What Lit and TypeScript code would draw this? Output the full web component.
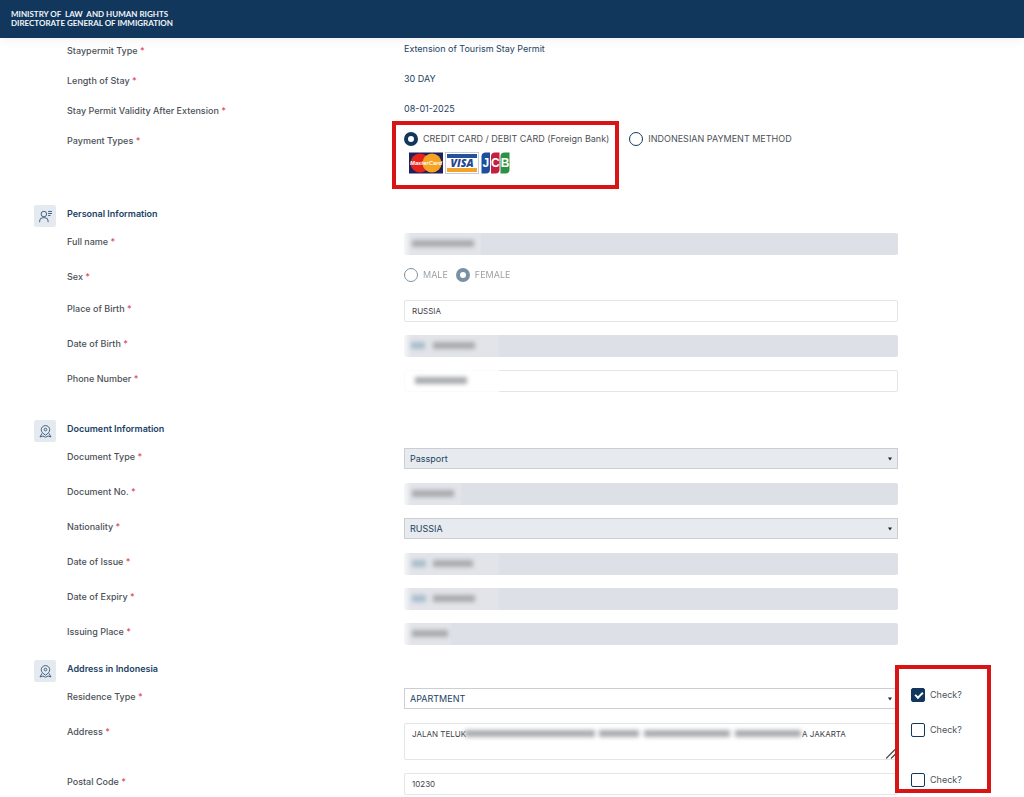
import { LitElement, html, css, svg, nothing, TemplateResult } from "lit";
import { customElement } from "lit/decorators.js";
import { classMap } from "lit/directives/class-map.js";
import { styleMap } from "lit/directives/style-map.js";

type Bar = { left: number; width: number; blue?: boolean };

const personIcon = svg`
  <circle cx="6" cy="5" r="3.400"></circle>
  <path d="M.8 15v-1.500a4 4 0 0 1 4-4h2.400a4 4 0 0 1 4 4V15"></path>
  <path d="M11.200 1.800H16M11.200 4.300H16M11.200 6.800h3"></path>`;

const pinIcon = svg`
  <path d="M8 12.500C5.200 10.600 2.800 8.700 2.800 5.900a5.200 5.200 0 0 1 10.400 0c0 2.800-2.400 4.700-5.200 6.600z"></path>
  <circle cx="8" cy="5.600" r="1.600"></circle>
  <path d="M3.800 10.200 1.200 14.800 4.800 13.600 8 15 11.200 13.600 14.800 14.800 12.200 10.200"></path>`;

@customElement("app-root")
export class AppRoot extends LitElement {
  static styles = css`
    :host {
      display: block;
      background: #fff;
      color: #4c5157;
      font: 400 9px/12px Inter, "Liberation Sans", sans-serif;
    }
    * {
      box-sizing: border-box;
    }
    .header {
      position: relative;
      display: flex;
      align-items: center;
      height: 38px;
      padding: 0 11px 1px;
      background: #12375c;
      color: #f1f5f9;
      font: 700 8px/9px Lato, "Liberation Sans", sans-serif;
      box-shadow: 0 2px 10px rgba(0, 0, 0, 0.06);
    }
    .brand {
      margin: 0;
      white-space: pre;
    }
    .main {
      padding: 4px 0 2px 67px;
    }
    .rows {
      display: flex;
      flex-direction: column;
      gap: 13px;
      position: relative;
    }
    .rows.info {
      gap: 15px;
      margin-bottom: 31px;
    }
    .row {
      display: grid;
      grid-template-columns: 337fr 494fr 126fr;
      align-items: start;
      min-height: 22px;
    }
    .info .row {
      min-height: 15px;
    }
    .row.short {
      min-height: 19px;
    }
    .label {
      padding-top: 3px;
      font-weight: 500;
    }
    .star {
      color: #e04a5c;
    }
    .value {
      line-height: 14px;
      color: #23425f;
    }
    .section {
      margin-bottom: 28px;
    }
    .section.tight {
      margin-bottom: 15px;
    }
    .section.last {
      margin-bottom: 0;
    }
    .head {
      display: flex;
      align-items: flex-start;
      gap: 11px;
      margin-left: -33px;
      height: 28px;
    }
    .badge {
      display: grid;
      place-items: center;
      width: 22px;
      height: 22px;
      border-radius: 2px;
      background: #e5eaf0;
    }
    .badge svg {
      width: 13px;
      height: 13px;
      fill: none;
      stroke: #3f5f80;
      stroke-width: 1.2;
    }
    .title {
      margin: 3px 0 0;
      font: 600 9px/12px Inter, "Liberation Sans", sans-serif;
      color: #1b4265;
    }
    .field {
      position: relative;
      display: block;
    }
    .text,
    .select,
    .area {
      display: block;
      width: 100%;
      margin: 0;
      border: 1px solid #e3e5e7;
      border-radius: 2px;
      outline: 0;
      background: #fff;
      color: #3f4347;
      font: 400 8px/12px Inter, "Liberation Sans", sans-serif;
      appearance: none;
    }
    .text {
      height: 22px;
      padding: 0 7px;
    }
    .text:disabled {
      border-color: #dde0e5;
      background: #dde0e6;
    }
    .area {
      height: 37px;
      padding: 4px 7px;
      resize: none;
      overflow: hidden;
    }
    .select {
      height: 21px;
      padding: 0 5px;
      border-color: #cbcfd4;
      border-radius: 0;
      color: #23425f;
      font-size: 9px;
      opacity: 1;
    }
    .select:disabled {
      background: #e7ebef;
    }
    .arrow {
      position: absolute;
      right: 6px;
      top: 9px;
      width: 4px;
      height: 4px;
      fill: #222;
    }
    .grip {
      position: absolute;
      right: 1px;
      bottom: 1px;
      width: 11px;
      height: 10px;
      fill: none;
      stroke: #444;
      stroke-width: 1.2;
    }
    .veil {
      position: absolute;
      left: -3px;
      top: -2px;
      bottom: -2px;
      background: linear-gradient(90deg, #fff, rgba(255, 255, 255, 0.15) 10px);
      filter: blur(1px);
    }
    .veil.light {
      background: rgba(255, 255, 255, 0.85);
    }
    .bar {
      position: absolute;
      top: 7px;
      height: 7px;
      background: #a9abae;
      filter: blur(2px);
    }
    .bar.blue {
      background: #a9bdcb;
    }
    .options {
      display: flex;
      align-items: flex-start;
      gap: 8px;
    }
    .options.wide {
      gap: 20px;
    }
    .pay {
      position: relative;
      display: flex;
      flex-direction: column;
      gap: 6px;
    }
    .choice {
      display: flex;
      align-items: center;
      gap: 5px;
      height: 14px;
      white-space: nowrap;
    }
    .choice.off {
      opacity: 0.55;
    }
    .check {
      padding-left: 13px;
    }
    .radio,
    .tick {
      position: relative;
      flex: none;
      width: 14px;
      height: 14px;
      margin: 0;
      border: 1px solid #12375c;
      background: #fff;
      appearance: none;
    }
    .radio {
      border-radius: 50%;
    }
    .radio:checked {
      border-width: 4px;
    }
    .tick {
      border-radius: 2px;
    }
    .tick:checked {
      background: #12375c;
    }
    .tick:checked::after {
      content: "";
      position: absolute;
      left: 3px;
      top: 3px;
      width: 6px;
      height: 3px;
      border: solid #fff;
      border-width: 0 0 2px 2px;
      transform: rotate(-45deg);
    }
    .cards {
      display: block;
      width: 102px;
      height: 22px;
      margin-left: 5px;
    }
    .mark {
      position: absolute;
      border: 4px solid #d91414;
      pointer-events: none;
    }
    .mark.payment {
      inset: -11px -10px -15px -12px;
    }
    .mark.checks {
      top: -23px;
      bottom: 2px;
      left: calc(831% / 9.57 - 3px);
      width: 96px;
    }
  `;

  private label(id: string, text: string) {
    return html`<label class="label" for=${id}>${text} <span class="star">*</span></label>`;
  }

  private row(id: string, text: string, field: unknown, check?: boolean) {
    return html`<div class="row">
      ${this.label(id, text)}
      <div class="field">${field}</div>
      ${check === undefined
        ? nothing
        : html`<label class="choice check"
            ><input class="tick" type="checkbox" .checked=${check} />Check?</label
          >`}
    </div>`;
  }

  private info(text: string, value: string) {
    return html`<div class="row">
      <div class="label">${text} <span class="star">*</span></div>
      <div class="value">${value}</div>
    </div>`;
  }

  private bars(bars: Bar[]) {
    return bars.map(
      (b) => html`<span
        class=${classMap({ bar: true, blue: !!b.blue })}
        style=${styleMap({ left: `${b.left}px`, width: `${b.width}px` })}
      ></span>`
    );
  }

  private hidden(id: string, veil: number, bars: Bar[], open = false) {
    return html`<input id=${id} class="text" ?disabled=${!open} />
      <span
        class=${classMap({ veil: true, light: open })}
        style=${styleMap({ width: `${veil}px` })}
      ></span>
      ${this.bars(bars)}`;
  }

  private select(id: string, value: string, disabled = true) {
    return html`<select id=${id} class="select" ?disabled=${disabled}>
        <option>${value}</option>
      </select>
      <svg class="arrow" viewBox="0 0 4 4" aria-hidden="true"><path d="M0 .5h4L2 3.500z"></path></svg>`;
  }

  private section(title: string, icon: TemplateResult | unknown, kind: string, rows: unknown) {
    return html`<section class="section ${kind}">
      <div class="head">
        <span class="badge"><svg viewBox="0 0 16 16" aria-hidden="true">${icon}</svg></span>
        <h2 class="title">${title}</h2>
      </div>
      <div class="rows">${rows}</div>
    </section>`;
  }

  private cards() {
    return html`<svg class="cards" viewBox="0 0 102 22" role="img" aria-label="MasterCard, Visa, JCB">
      <rect x="0" y="0.500" width="34" height="21" fill="#20215c"></rect>
      <circle cx="11" cy="11" r="9.500" fill="#e5231d"></circle>
      <circle cx="23" cy="11" r="9.500" fill="#f5a320"></circle>
      <text x="17" y="13" fill="#fff" font-family="Liberation Sans" font-size="5.800" font-weight="700" font-style="italic" text-anchor="middle">MasterCard</text>
      <rect x="36.500" y="0.500" width="33" height="21" fill="#fff" stroke="#c7cbd6"></rect>
      <rect x="38" y="2" width="30" height="4" fill="#25509c"></rect>
      <rect x="38" y="16" width="30" height="4" fill="#f0a42c"></rect>
      <text x="53" y="14.800" fill="#24478f" font-family="Open Sans" font-size="10.500" font-weight="800" font-style="italic" text-anchor="middle">VISA</text>
      <path d="M76 .5h5v17a4 4 0 0 1-4 4h-4.500v-17a4 4 0 0 1 3.500-4z" fill="#1d4f9e"></path>
      <path d="M86 .5h4.500v17a4 4 0 0 1-4 4H82v-17a4 4 0 0 1 4-4z" fill="#c4203f"></path>
      <path d="M95.500 .5h5v17a4 4 0 0 1-4 4h-5v-17a4 4 0 0 1 4-4z" fill="#2c9144"></path>
      <g fill="#fff" font-family="Liberation Sans" font-size="12" font-weight="700" text-anchor="middle">
        <text x="76.800" y="15.300">J</text><text x="86.300" y="15.300">C</text><text x="96" y="15.300">B</text>
      </g>
    </svg>`;
  }

  render() {
    const address = "JALAN TELUK" + "\u2003".repeat(42) + "A JAKARTA";
    return html`
      <header class="header">
        <p class="brand">${"MINISTRY OF  LAW  AND HUMAN RIGHTS\nDIRECTORATE GENERAL OF IMMIGRATION"}</p>
      </header>
      <main class="main">
        <div class="rows info">
          ${this.info("Staypermit Type", "Extension of Tourism Stay Permit")}
          ${this.info("Length of Stay", "30 DAY")}
          ${this.info("Stay Permit Validity After Extension", "08-01-2025")}
          <div class="row">
            <div class="label" id="pay-label">Payment Types <span class="star">*</span></div>
            <div class="options wide" role="radiogroup" aria-labelledby="pay-label">
              <div class="pay">
                <label class="choice"
                  ><input class="radio" type="radio" name="pay" checked />CREDIT CARD / DEBIT CARD (Foreign Bank)</label
                >
                ${this.cards()}
                <span class="mark payment"></span>
              </div>
              <label class="choice"
                ><input class="radio" type="radio" name="pay" />INDONESIAN PAYMENT METHOD</label
              >
            </div>
          </div>
        </div>

        ${this.section(
          "Personal Information",
          personIcon,
          "",
          html`
            ${this.row("name", "Full name", this.hidden("name", 80, [{ left: 8, width: 62 }]))}
            <div class="row short">
              <div class="label" id="sex-label">Sex <span class="star">*</span></div>
              <div class="options" role="radiogroup" aria-labelledby="sex-label">
                <label class="choice off"><input class="radio" type="radio" name="sex" disabled />MALE</label>
                <label class="choice off"><input class="radio" type="radio" name="sex" checked disabled />FEMALE</label>
              </div>
            </div>
            ${this.row("birthplace", "Place of Birth", html`<input id="birthplace" class="text" value="RUSSIA" />`)}
            ${this.row("birthdate", "Date of Birth", this.hidden("birthdate", 98, [{ left: 7, width: 14, blue: true }, { left: 29, width: 42 }]))}
            ${this.row("phone", "Phone Number", this.hidden("phone", 98, [{ left: 11, width: 52 }], true))}
          `
        )}
        ${this.section(
          "Document Information",
          pinIcon,
          "tight",
          html`
            ${this.row("doctype", "Document Type", this.select("doctype", "Passport"))}
            ${this.row("docno", "Document No.", this.hidden("docno", 60, [{ left: 8, width: 42 }]))}
            ${this.row("nation", "Nationality", this.select("nation", "RUSSIA"))}
            ${this.row("issue", "Date of Issue", this.hidden("issue", 98, [{ left: 8, width: 14, blue: true }, { left: 29, width: 40 }]))}
            ${this.row("expiry", "Date of Expiry", this.hidden("expiry", 98, [{ left: 8, width: 14, blue: true }, { left: 29, width: 42 }]))}
            ${this.row("place", "Issuing Place", this.hidden("place", 50, [{ left: 8, width: 36 }]))}
          `
        )}
        ${this.section(
          "Address in Indonesia",
          pinIcon,
          "last",
          html`
            ${this.row("residence", "Residence Type", this.select("residence", "APARTMENT", false), true)}
            ${this.row(
              "address",
              "Address",
              html`<textarea id="address" class="area" .value=${address}></textarea>
                ${this.bars([
                  { left: 61, width: 130 },
                  { left: 195, width: 40 },
                  { left: 240, width: 86 },
                  { left: 331, width: 66 },
                ])}
                <svg class="grip" viewBox="0 0 11 10" aria-hidden="true"><path d="M0 9.500 9 .5M5 9.500l5-5"></path></svg>`,
              false
            )}
            ${this.row("postal", "Postal Code", html`<input id="postal" class="text" value="10230" />`, false)}
            <span class="mark checks"></span>
          `
        )}
      </main>
    `;
  }
}
